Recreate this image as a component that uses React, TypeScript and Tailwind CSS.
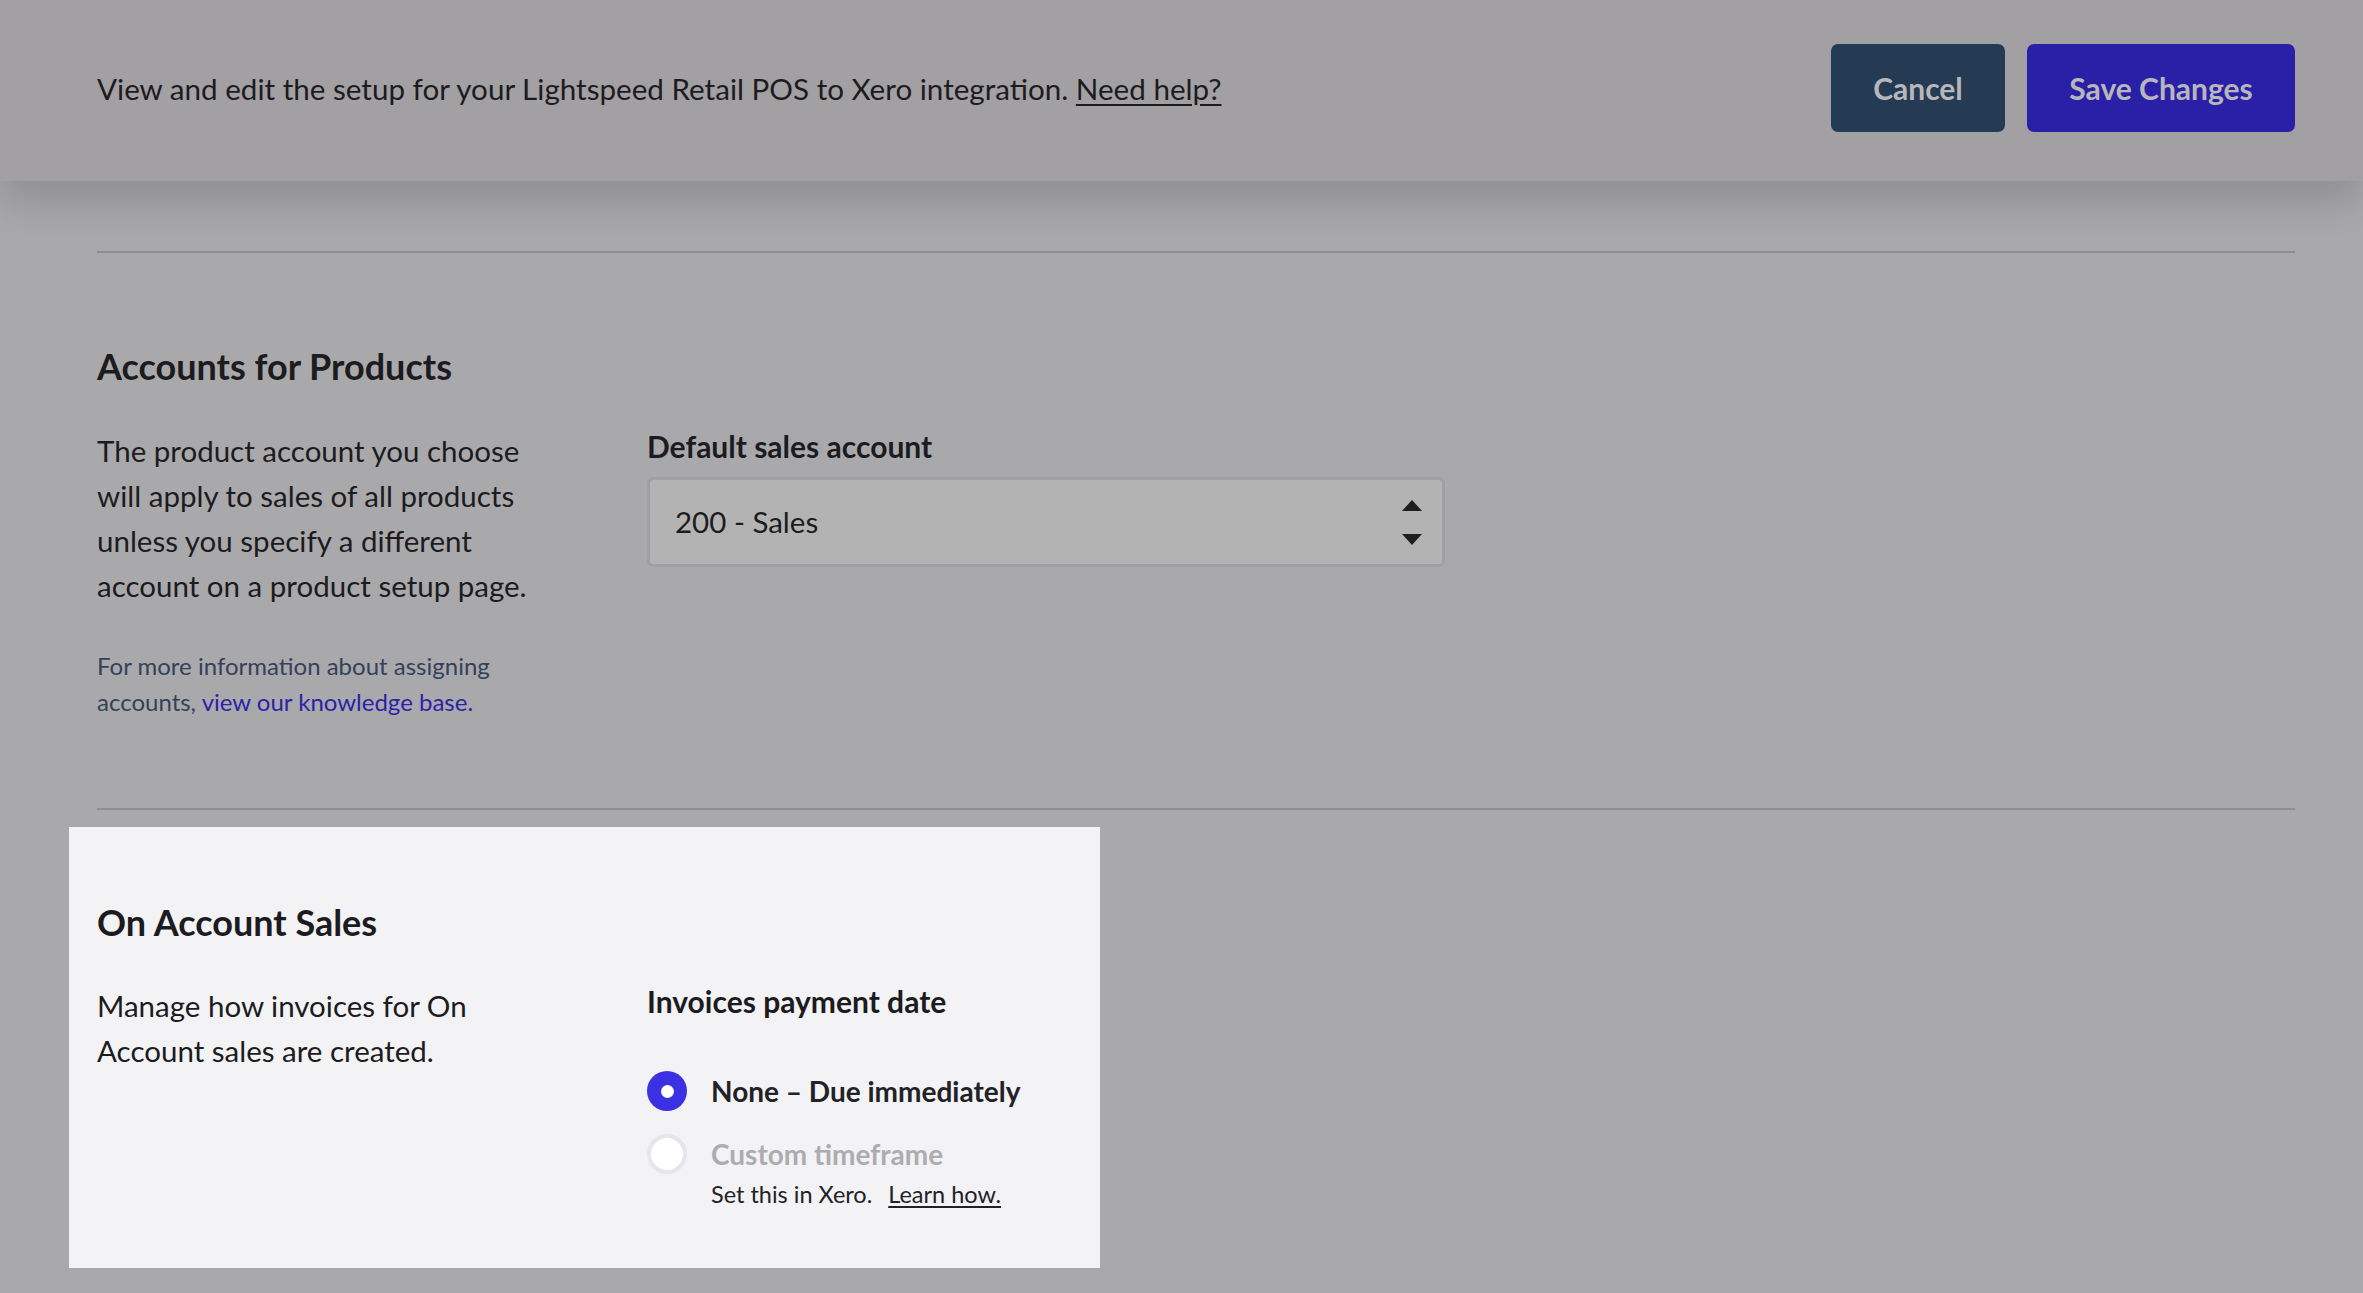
import { useState } from 'react'

function SelectArrows() {
  return (
    <svg width="20" height="52" viewBox="0 0 20 52" className="shrink-0">
      <path d="M10 4 L20 15 L0 15 Z" fill="#1e1e22" />
      <path d="M0 38 L20 38 L10 49 Z" fill="#1e1e22" />
    </svg>
  )
}

function Radio({ checked }: { checked: boolean }) {
  if (checked) {
    return (
      <span className="w-[40px] h-[40px] rounded-full bg-[#3b31e3] flex items-center justify-center shrink-0">
        <span className="w-[13px] h-[13px] rounded-full bg-white" />
      </span>
    )
  }
  return <span className="w-[40px] h-[40px] rounded-full bg-white border-[4px] border-[#e6e5e9] shrink-0" />
}

export default function App() {
  const [choice] = useState('none')

  return (
    <div className="min-h-screen bg-[#a9a9ab] font-['Lato','Noto_Sans',sans-serif] text-[#1f1f23]">
      {/* Top bar */}
      <header className="relative z-10 h-[181px] bg-[#a2a0a3] pl-[97px] pr-[68px] flex items-center justify-between shadow-[0_20px_40px_rgba(0,0,0,0.16)]">
        <p className="text-[29.6px] text-[#1c1c20] -mt-[2px]">
          View and edit the setup for your Lightspeed Retail POS to Xero integration.{' '}
          <a href="#" className="underline underline-offset-[4px]">Need help?</a>
        </p>
        <div className="flex items-center gap-[22px] -mt-[5px]">
          <button className="h-[88px] w-[174px] rounded-[7px] bg-[#253a53] text-[#b7b7bb] text-[30px] font-bold">
            Cancel
          </button>
          <button className="h-[88px] w-[268px] rounded-[7px] bg-[#2a20a7] text-[#b7b7bb] text-[30px] font-bold">
            Save Changes
          </button>
        </div>
      </header>

      <main className="pl-[97px] pr-[68px] pt-[70px]">
        <div className="border-t-2 border-[#8e8e90]" />

        {/* Accounts for Products */}
        <section className="pt-[93px] pb-[88px]">
          <h2 className="text-[36px] font-bold leading-[40px] text-[#1c1c20]">Accounts for Products</h2>
          <div className="mt-[42px] flex">
            <div className="w-[550px] shrink-0 pr-[20px]">
              <p className="text-[29.5px] leading-[45px] text-[#1c1c20] w-[440px]">
                The product account you choose will apply to sales of all products unless you specify a different account on a product setup page.
              </p>
              <p className="mt-[40px] text-[24px] leading-[36px] text-[#34415b] w-[430px]">
                For more information about assigning accounts,{' '}
                <a href="#" className="text-[#2c22a9]">view our knowledge base.</a>
              </p>
            </div>
            <div className="w-[798px]">
              <label className="block text-[30px] font-bold leading-[36px] text-[#1c1c20]">Default sales account</label>
              <div className="mt-[13px] h-[90px] rounded-[6px] border-[3px] border-[#a09fa2] bg-[#b3b3b3] flex items-center justify-between pl-[25px] pr-[20px]">
                <span className="text-[29.5px] text-[#1c1c20]">200 - Sales</span>
                <SelectArrows />
              </div>
            </div>
          </div>
        </section>

        <div className="border-t-2 border-[#8e8e90]" />

        {/* On Account Sales (highlighted) */}
        <section className="mt-[17px] -ml-[28px] w-[1031px] bg-[#f3f2f5] px-[28px] pt-[75px] pb-[56px]">
          <h2 className="text-[36px] font-bold leading-[40px] text-[#1c1c20]">On Account Sales</h2>
          <div className="mt-[41px] flex">
            <div className="w-[550px] shrink-0 pr-[20px]">
              <p className="text-[29.5px] leading-[45px] text-[#1c1c20] w-[400px]">
                Manage how invoices for On Account sales are created.
              </p>
            </div>
            <div>
              <div className="text-[30px] font-bold leading-[36px] text-[#1c1c20]">Invoices payment date</div>
              <div className="mt-[51px] flex flex-col gap-[21px]">
                <label className="flex items-center gap-[24px]">
                  <Radio checked={choice === 'none'} />
                  <span className="text-[28px] font-bold text-[#222226]">None – Due immediately</span>
                </label>
                <div>
                  <label className="flex items-center gap-[24px]">
                    <Radio checked={choice === 'custom'} />
                    <span className="text-[28px] font-bold text-[#adadb0]">Custom timeframe</span>
                  </label>
                  <p className="ml-[64px] mt-[2px] text-[23.5px] text-[#222226]">
                    Set this in Xero.
                    <a href="#" className="ml-[16px] underline underline-offset-[3px]">Learn how.</a>
                  </p>
                </div>
              </div>
            </div>
          </div>
        </section>
      </main>
    </div>
  )
}
